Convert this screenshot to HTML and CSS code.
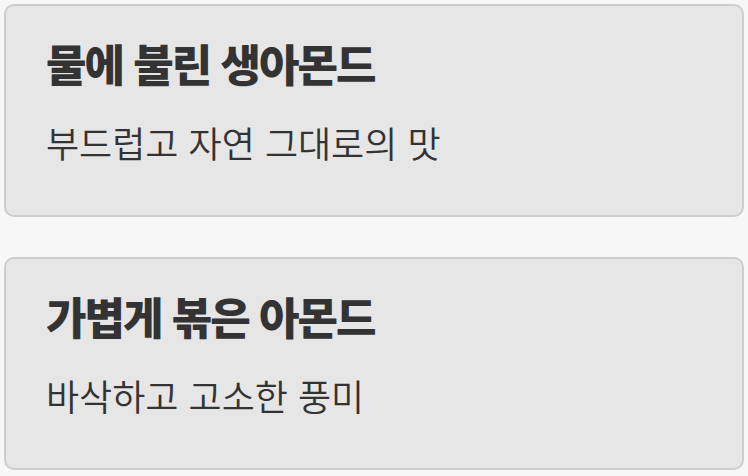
FILE: index.html
```html
<!DOCTYPE html>
<html lang="ko">
<head>
  <meta charset="UTF-8" />
  <title>아몬드 선택</title>
  <link rel="stylesheet" href="styles.css">
</head>
<body>
  <div class="option-list">
    <div class="option-card">
      <h2 class="option-title">물에 불린 생아몬드</h2>
      <p class="option-desc">부드럽고 자연 그대로의 맛</p>
    </div>
    <div class="option-card">
      <h2 class="option-title">가볍게 볶은 아몬드</h2>
      <p class="option-desc">바삭하고 고소한 풍미</p>
    </div>
  </div>
</body>
</html>
```

FILE: styles.css
```css
body {
  font-family: "Noto Sans CJK KR", "Noto Sans", sans-serif;
  background-color: #f7f7f7;
  margin: 0;
  padding: 4px;
}

.option-list {
  display: flex;
  flex-direction: column;
  gap: 40px;
}

.option-card {
  background-color: #e6e6e6;
  border: 2px solid #cdcdcd;
  border-radius: 10px;
  height: 213px;
  box-sizing: border-box;
  padding: 31px 40px;
}

.option-title {
  margin: 0 0 29px;
  font-size: 44px;
  font-weight: 900;
  line-height: 1.2;
  color: #333;
  letter-spacing: -2px;
}

.option-desc {
  margin: 0;
  font-size: 36px;
  font-weight: 350;
  line-height: 1.3;
  color: #333;
}
```
